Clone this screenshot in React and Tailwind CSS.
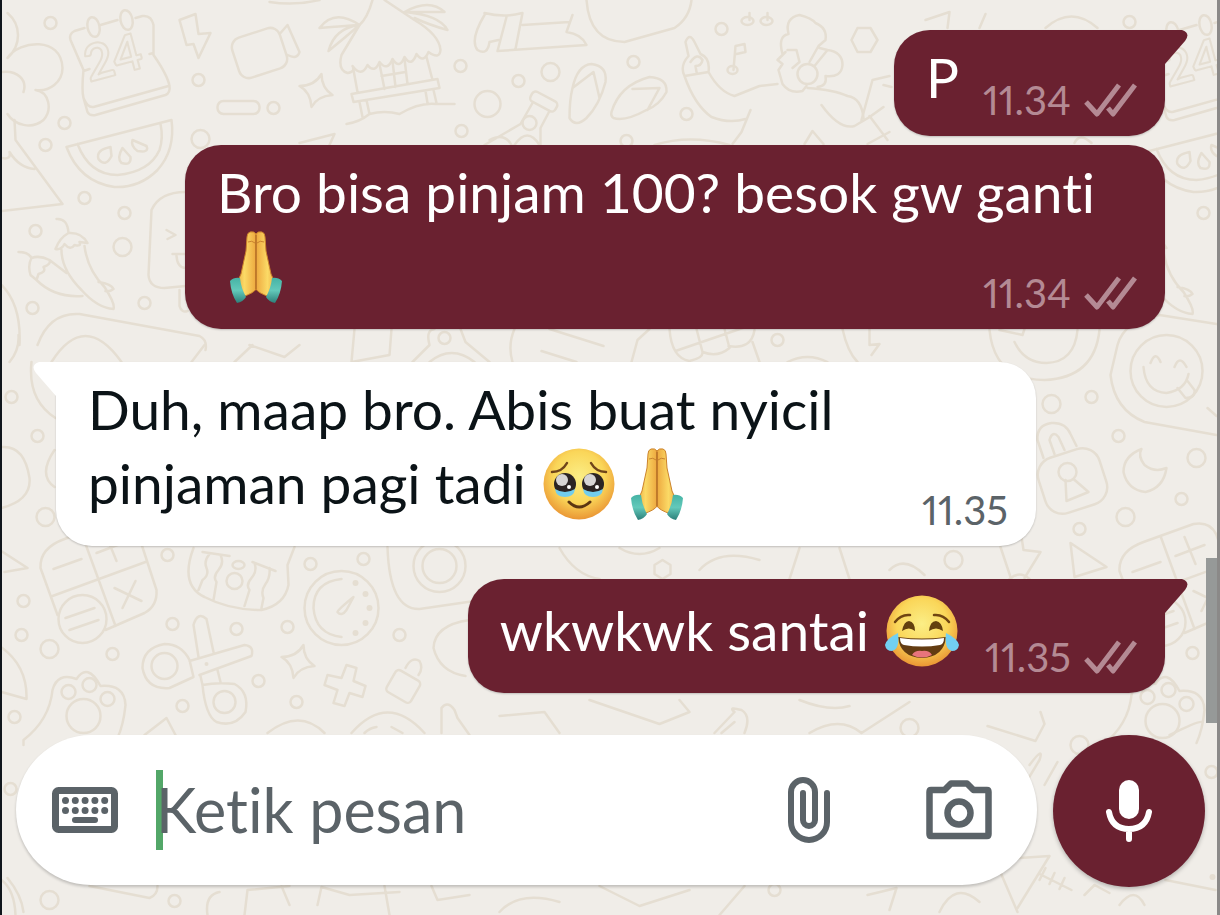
import React, { useState } from 'react';
import clsx from 'clsx';

const MESSAGES = [
    { id: 1, mine: true, tail: true, time: '11.34', lines: [['P']] },
    { id: 2, mine: true, time: '11.34', lines: [['Bro bisa pinjam 100? besok gw ganti'], [{ emoji: 'pray' }]] },
    { id: 3, mine: false, tail: true, time: '11.35', lines: [['Duh, maap bro. Abis buat nyicil'], ['pinjaman pagi tadi ', { emoji: 'plead' }, { emoji: 'pray' }]] },
    { id: 4, mine: true, tail: true, time: '11.35', lines: [['wkwkwk santai ', { emoji: 'joy' }]] },
];

const SMALL_DOTS = [
    [51, 23], [199, 80], [274, 108], [65, 123], [46, 145], [85, 198], [125, 213], [36, 231], [33, 308], [145, 303],
    [461, 66], [519, 81], [462, 131], [634, 62], [722, 29], [687, 114], [627, 141], [12, 397], [38, 436],
    [1092, 397], [1119, 436], [1182, 499], [1080, 529], [1204, 213], [778, 340], [445, 338],
    [168, 555], [311, 564], [364, 559], [24, 601], [22, 635], [113, 654], [173, 624], [237, 629], [288, 627],
    [400, 635], [259, 681], [183, 706], [297, 702], [15, 717], [1193, 653], [11, 789], [175, 901], [775, 890], [1130, 22], [1212, 772],
];
const BIG_DOTS = [[201, 139], [123, 247], [551, 72], [1052, 404], [1197, 458], [1126, 517], [50, 649], [46, 517], [1080, 745], [50, 900], [954, 560], [910, 728]];

function Wallpaper() {
    return (
        <svg className="absolute inset-0 h-full w-full" viewBox="0 0 1220 915" preserveAspectRatio="xMidYMid slice" aria-hidden="true">
            <defs>
                <g id="doodle-left">
                    {/* calendar */}
                    <path d="M85 28L75 31Q69 34 71 40L84 70Q82 90 84 98L88 112Q90 116 96 115L166 95Q171 93 170 86Q168 75 154 55L154 25Q152 15 143 16L136 18M101 25L118 20M84 98Q88 108 94 107L169 86M84 71L90 69M150 54L154 53" />
                    <ellipse cx="94" cy="27" rx="6" ry="10" transform="rotate(-12 94 27)" />
                    <ellipse cx="127" cy="20" rx="6" ry="10" transform="rotate(-12 127 20)" />
                    <text x="90" y="82" fontSize="50" fontWeight="700" fontFamily="Lato, sans-serif" strokeWidth="2" transform="rotate(-15 90 82)">24</text>
                    {/* watermelon */}
                    <path d="M67 147L172 120Q176 150 158 170Q140 188 115 187Q80 182 67 147ZM78 144Q90 175 118 175Q150 172 160 150Q164 138 161 124" />
                    <path d="M111 147Q96 150 99 159Q106 168 112 156ZM123 148Q117 158 122 163Q132 166 131 157ZM133 140Q131 146 138 151Q150 153 147 146Z" />
                    {/* chilli */}
                    <path d="M57 219Q68 218 69 233Q60 238 56 249Q62 250 65 244Q71 251 75 245Q82 247 80 242L88 243Q82 232 69 233M62 250Q62 270 82 290Q98 308 114 309Q116 304 105 287Q88 270 85 246M19 252Q29 252 32 258Q28 265 31 275L37 280L39 274Q47 272 44 267Q52 264 50 260Q40 255 32 258M37 280Q55 298 83 296M50 260L67 273M99 282Q112 284 114 289Q110 292 106 291" />
                    {/* paw */}
                    <path d="M24 745V740Q50 720 53 690Q58 672 77 679Q88 662 101 686Q125 684 126 705Q124 725 118 738" />
                    <circle cx="69" cy="692" r="7" /><circle cx="90" cy="685" r="7" /><circle cx="108" cy="699" r="7" /><circle cx="84" cy="716" r="17" />
                </g>
                <path id="spark" d="M300 86Q315 86 322 74Q322 88 333 95Q318 96 312 107Q311 92 300 86Z" />
                <g id="keypad">
                    <path d="M65 539Q40 548 41 568L58 615M65 539L115 521Q132 518 138 532L157 590Q158 606 145 613L106 630M82 533L116 626M53 596L146 562M54 569L82 559M97 553L126 542M106 534L117 561M115 588L142 601M136 581L123 608M66 618L95 608M70 630L99 620" />
                    <circle cx="83" cy="619" r="24" />
                </g>
            </defs>
            <g className="fill-none stroke-[#e5ded2]" strokeWidth="2.5" strokeLinecap="round" strokeLinejoin="round">
                <use href="#doodle-left" />
                <use href="#doodle-left" transform="translate(1079 5)" />
                <use href="#keypad" />
                <use href="#keypad" transform="translate(1079 3)" />
                <use href="#spark" />
                <use href="#spark" transform="translate(-18 571)" />
                {SMALL_DOTS.map(([x, y]) => <circle key={`${x}-${y}`} cx={x} cy={y} r="6" />)}
                {BIG_DOTS.map(([x, y]) => <circle key={`${x}-${y}`} cx={x} cy={y} r="9" />)}

                {/* flower, skirt, lightning, camcorder, pill */}
                <path d="M8 13C22 25 22 45 8 58C20 40 62 36 63 68C63 82 50 92 36 90C50 92 53 110 44 120C32 130 15 125 8 114M2 72C18 70 28 80 24 92" />
                <path d="M15 120L16 140L63 204L2 211M2 158Q12 160 10 152Q20 168 35 169" />
                <path d="M180 20L196 14L199 34L211 33L199 58L194 44L187 45Z" />
                <rect x="235" y="32" width="50" height="42" rx="10" transform="rotate(-18 260 53)" />
                <path d="M281 33L288 25L300 52Q298 60 288 55" />
                <rect x="218" y="101" width="42" height="13" rx="6" />
                <circle cx="488" cy="104" r="13" />

                {/* beach hut */}
                <path d="M373 0Q368 18 360 25L342 55Q338 70 348 73Q356 72 353 66Q362 78 368 65Q375 74 380 62Q388 72 393 59Q400 70 405 57Q412 68 417 54Q424 64 429 52Q440 60 441 50Q440 35 415 20L385 0" />
                <path d="M354 70L358 92M380 64L385 89M393 61L396 87M405 59L408 84M382 76L406 72M427 57L433 80M352 94L438 79L440 88L354 102ZM360 102L363 117M367 100L370 114M426 91L428 103M434 90L437 103M347 124Q360 122 370 114Q385 110 400 114Q420 102 437 104L455 104" />
                <path d="M360 25Q335 8 320 28Q345 26 360 25Q335 28 329 51Q345 38 360 25M405 12Q430 -2 445 12Q420 12 405 12Q440 15 448 30Q430 25 415 18" />

                {/* boot, plate, flip-flops */}
                <path d="M485 15Q470 40 478 50Q488 56 490 42L499 40M485 13Q505 18 523 13L516 49M507 17L498 51L587 45Q582 34 567 32L573 15M523 25L570 22" />
                <path d="M587 0Q590 42 625 42L675 28Q690 18 692 0M270 2Q295 6 320 0" />
                <path d="M573 88Q578 65 592 64Q608 66 606 82Q600 105 587 118Q576 128 570 118Q570 100 573 88L594 72L600 98M612 112Q620 85 650 77Q668 78 667 92Q660 105 647 110Q625 122 614 118Q611 116 612 112M633 89L660 88L648 110" />
                <rect x="530" y="96" width="28" height="11" rx="4" transform="rotate(28 544 102)" />
                <path d="M533 103L521 124L485 145M550 111L541 128V145M490 140Q505 132 512 145M515 145Q528 126 540 145" />
                <circle cx="530" cy="123" r="7" />

                {/* dancing woman */}
                <path d="M685 76Q680 66 689 56L686 42Q690 32 695 42L701 54Q711 58 709 72L685 76Q695 105 712 117Q730 124 746 119M709 72Q720 92 735 96Q750 90 760 86L778 84M822 105Q840 130 855 126Q870 118 884 107M751 110L742 132L733 144M691 62Q698 52 703 60Q702 66 696 66L697 72M808 88Q835 90 848 96Q862 98 864 118" />
                <path d="M734 70L736 46L745 44L746 52L737 54M750 20V13M768 20V13" />
                <ellipse cx="733" cy="70" rx="5" ry="4" /><ellipse cx="748" cy="21" rx="6" ry="4" /><ellipse cx="767" cy="21" rx="6" ry="4" />
                <path d="M783 54Q778 36 789 34Q785 18 800 15Q812 18 816 23Q828 28 826 40L819 46L810 62M788 50L797 50L800 62L793 68M786 52L778 60L783 64L779 70L783 84Q790 94 803 91L807 86M820 48L828 50L815 66M828 50Q843 52 843 65Q842 78 826 76Q828 86 818 87" />
                <circle cx="808" cy="74" r="10" />
                <path d="M858 28H871L878 40L871 52H858L852 40ZM862 120L873 80L890 76M870 116L888 140M868 144L890 132M300 143L335 134L330 145M805 144L813 131L824 144M655 145Q690 134 730 145" />
                <path d="M926 20L950 12L948 28M980 28L986 14M1046 28Q1072 5 1098 28M1075 143Q1080 132 1092 143M884 85L892 87" />

                {/* popsicle and tray */}
                <path d="M186 192Q160 192 152 210L149 275Q150 288 165 288L186 286M180 290V306Q182 313 188 311M167 230L176 235L168 239M173 254H186M177 256Q178 268 186 268" />
                <path d="M2 285Q22 305 20 345M38 345Q50 312 80 314L200 336Q208 340 206 350M32 362Q28 400 56 418M52 362Q85 310 122 362M10 362Q20 350 19 335" />
                <path d="M413 362L430 345Q426 330 435 329M461 329L466 342L490 362M430 362Q452 344 475 362M515 329Q508 345 513 362M550 329L604 346M542 351L577 362M632 362L638 340L650 329M670 329Q672 358 690 361Q704 358 703 352L697 329M676 351L752 325M725 329L730 348Q718 358 703 352M729 346Q752 350 755 330M753 342L760 362M788 362Q808 352 828 362M843 329Q848 352 858 362M870 329L870 345L880 344L872 355M192 362L205 345M250 345L285 357L300 345M355 329L352 362L390 355L392 329M235 362L253 345" />

                {/* smileys, padlock, moon */}
                <path d="M1217 324L1160 315Q1125 320 1118 345L1111 375Q1115 410 1145 422L1217 435M1144 367Q1146 392 1167 393Q1186 390 1189 374M1151 363Q1156 350 1161 362M1175 367Q1180 354 1187 367M1178 388L1186 398Q1196 398 1195 390L1188 381M1208 408L1217 416" />
                <circle cx="1167" cy="371" r="36" />
                <path d="M990 330Q995 380 1045 380Q1095 378 1100 330M1015 342Q1025 363 1047 363Q1075 362 1078 330M1000 330L1023 335L1025 329" />
                <rect x="1041" y="452" width="64" height="58" rx="18" transform="rotate(-18 1073 481)" />
                <path d="M1044 458L1038 440Q1037 425 1052 423Q1066 422 1071 434L1077 446M1055 454L1050 440Q1053 430 1059 437L1065 450" />
                <circle cx="1068" cy="472" r="9" />
                <path d="M1066 480L1067 501L1089 492L1074 479M1142 449Q1124 456 1124 472Q1128 490 1146 492Q1164 488 1167 468Q1155 473 1145 465Q1138 456 1142 449Z" />
                <path d="M1001 547L1012 580M1022 537L1024 550L1041 552L1025 578M1071 543L1107 567L1075 577ZM2 447Q25 445 30 478Q32 500 2 508M55 450Q38 475 55 487M0 550L28 568L5 572" />

                {/* bowl, stopwatch, camera */}
                <path d="M194 548Q180 585 205 597Q230 610 262 610Q285 605 289 585L288 565L295 547M203 552L230 556M253 562L276 571M210 554Q204 561 207 568T203 580L199 590M221 555Q225 563 219 570T217 582L214 600M255 563Q258 571 252 578T250 590L245 606M270 568Q271 577 266 584T264 598L262 608" />
                <circle cx="235" cy="581" r="8" /><ellipse cx="239" cy="565" rx="6" ry="4" />
                <circle cx="342" cy="608" r="37" />
                <path d="M342 579Q314 582 314 608Q316 634 342 637M354 597Q338 610 338 612Q342 617 347 610Z" />
                <path d="M388 547Q390 610 420 609L475 601M470 620Q435 625 434 648Q440 672 466 676" />
                <circle cx="440" cy="566" r="26" /><circle cx="440" cy="566" r="17" />
                <path d="M560 548Q575 575 600 579M620 548Q640 560 660 548M655 565L663 560L671 565V574L663 579L655 574ZM700 570Q720 548 760 560M790 579L800 548M840 548L850 579M890 570Q905 555 925 575M1010 579Q1020 570 1030 579" />

                {/* scissors, plus, tag */}
                <circle cx="165" cy="666" r="13" /><circle cx="225" cy="702" r="11" />
                <path d="M190 660Q182 644 165 644Q143 648 143 668Q147 690 170 688L194 677ZM190 661L245 645Q255 646 252 656L200 675M199 657L194 625Q198 611 207 619L214 652M203 685L201 676M218 670L221 682M203 685Q218 682 235 684Q250 692 246 712Q235 728 217 722Q206 716 203 685Z" />
                <path d="M347 665L357 668L354 681L366 686L363 697L350 693L345 706L334 703L338 690L325 685L328 675L342 678Z" />
                <rect x="390" y="674" width="28" height="25" rx="4" transform="rotate(30 404 686)" />
                <path d="M406 668Q412 656 420 661Q424 668 419 675M442 733V708Q448 700 455 710L458 718L470 735M145 735L167 718L176 735M268 733Q300 708 325 733M352 733Q388 692 425 733M365 733Q370 728 377 727M392 727L403 733M0 646Q28 665 27 699L2 692" />
                <path d="M500 716L545 712L560 733M590 700L660 724L690 712L680 700M715 733L735 712Q728 706 742 710Q752 716 745 733M735 722L722 733M800 700Q830 712 850 706M810 733Q840 715 862 733L910 702M988 726L1036 741L1045 724L1041 712M1170 735Q1200 720 1203 722M1030 765Q1045 745 1040 760L1025 785M1045 785L1058 762" />

                {/* strip under the composer */}
                <path d="M2 880Q15 890 16 915M8 878Q22 895 24 912M90 886L150 898Q158 895 158 886M208 915Q205 895 220 892M245 915L248 890L290 886M282 886L290 905M318 905L322 887L350 895L400 892M385 886L390 915M432 886L438 900L470 895M500 912Q520 890 560 902M600 886L640 906L690 890M720 915L745 886M868 895L897 888L890 910M940 912Q955 880 980 902M1000 870L1018 912M1020 858L1050 856L1018 908M1040 874L1072 890M1040 880L1046 868M1050 884L1055 873M1060 889L1065 878M1085 895L1095 885L1110 893M1120 905Q1135 885 1145 905M1166 880L1216 890" />
            </g>
            <g className="fill-[#e5ded2]">
                <circle cx="356" cy="583" r="3" /><circle cx="366" cy="594" r="3" /><circle cx="370" cy="608" r="3" /><circle cx="366" cy="623" r="3" /><circle cx="356" cy="633" r="3" />
                <circle cx="1213" cy="877" r="3" /><circle cx="207" cy="664" r="2" />
            </g>
        </svg>
    );
}

function Pray() {
    return (
        <svg className="mx-[3px] inline-block size-[72px] align-[-16px]" viewBox="0 0 72 72" role="img" aria-label="🙏">
            <defs>
                <linearGradient id="hand" x1="0" x2="1">
                    <stop offset="0" stopColor="#e8a23c" />
                    <stop offset=".45" stopColor="#fbda66" />
                    <stop offset="1" stopColor="#eda83f" />
                </linearGradient>
                <linearGradient id="cuff" x1="0" x2="0" y1="0" y2="1">
                    <stop offset="0" stopColor="#46b3a5" />
                    <stop offset=".5" stopColor="#63c9ba" />
                    <stop offset="1" stopColor="#2c7f79" />
                </linearGradient>
            </defs>
            <g id="pray-half">
                <path d="M36 3Q34 0 30 1Q27 2 27 6L26 20L21 43Q19 49 15 53L22 66Q34 62 36 58Z" fill="url(#hand)" stroke="#cc832c" />
                <path d="M28 11Q32 9 35 12" className="fill-none stroke-[#c9822f]" />
                <path d="M10 50Q14 46 20 47Q21 57 26 66Q23 71 17 72Q11 63 10 50Z" fill="url(#cuff)" />
            </g>
            <use href="#pray-half" transform="matrix(-1 0 0 1 72 0)" />
            <path d="M36 4V58" className="stroke-[#b97328]" strokeWidth="1.5" />
        </svg>
    );
}

function FaceGradient({ id }) {
    return (
        <radialGradient id={id} cx=".5" cy=".4" r=".6">
            <stop offset="0" stopColor="#fbee86" />
            <stop offset=".6" stopColor="#fad659" />
            <stop offset="1" stopColor="#ea9634" />
        </radialGradient>
    );
}

function Plead() {
    return (
        <svg className="mx-[3px] inline-block size-[72px] align-[-16px]" viewBox="0 0 72 72" role="img" aria-label="🥹">
            <defs><FaceGradient id="plead-face" /></defs>
            <circle cx="36" cy="36" r="35.5" fill="url(#plead-face)" />
            <path d="M9 24Q19 24 24 15M63 24Q53 24 48 15" className="fill-none stroke-[#70451a]" strokeWidth="2.5" strokeLinecap="round" />
            {[22, 50].map((x) => (
                <g key={x}>
                    <circle cx={x} cy="36" r="11" className="fill-[#2b2424]" />
                    <path d={`M${x - 10} 41Q${x} 47 ${x + 10} 41Q${x + 9} 49 ${x} 49Q${x - 9} 49 ${x - 10} 41Z`} className="fill-[#72cdec]" />
                    <circle cx={x - 3} cy="32" r="6" className="fill-[#d7d5d5]" />
                    <circle cx={x + 4} cy="39" r="2" className="fill-white" />
                </g>
            ))}
            <path d="M26 54Q36 64 47 54" className="fill-none stroke-[#5b3512]" strokeWidth="3" strokeLinecap="round" />
        </svg>
    );
}

function Joy() {
    return (
        <svg className="mx-[3px] inline-block size-[72px] overflow-visible align-[-16px]" viewBox="0 0 72 72" role="img" aria-label="😂">
            <defs><FaceGradient id="joy-face" /></defs>
            <circle cx="36" cy="36" r="35.5" fill="url(#joy-face)" />
            <path d="M9 27Q15 19 24 20M63 27Q57 19 48 20" className="fill-none stroke-[#704512]" strokeWidth="2.5" strokeLinecap="round" />
            <path d="M16 36Q18 26 23 26Q29 27 29 36Q23 31 16 36ZM43 36Q44 26 50 26Q56 27 57 36Q50 31 43 36Z" className="fill-[#63400f]" />
            <path d="M12 42Q36 45 60 42Q58 62 36 63Q14 62 12 42Z" className="fill-[#633c12]" />
            <path d="M14 43Q36 46 58 43Q58 49 54 50Q36 53 18 50Q14 49 14 43Z" className="fill-white" />
            <path d="M26 60Q29 55 36 56Q43 55 46 60Q36 65 26 60Z" className="fill-[#e8747c]" />
            <path d="M12 38Q0 44 -1 50Q0 56 6 56Q14 54 12 38ZM60 38Q72 44 73 50Q72 56 66 56Q58 54 60 38Z" className="fill-[#72d0f2]" />
        </svg>
    );
}

const EMOJI = { pray: Pray, plead: Plead, joy: Joy };

function Ticks() {
    return (
        <svg className="h-9 w-[54px]" viewBox="0 0 54 36" fill="none" stroke="currentColor" strokeWidth="5" role="img" aria-label="Terkirim">
            <path d="M3 20L14 32L36 3M25 26L30 32L52 3" strokeLinejoin="round" />
        </svg>
    );
}

function Bubble({ message }) {
    const { mine, tail, time, lines } = message;
    const long = lines.length > 1;
    const hasEmoji = lines[0].length > 1;

    return (
        <li className={clsx('flex', mine ? 'justify-end' : 'justify-start', message.id === 2 && 'mt-[9px]', message.id > 2 && 'mt-[33px]')}>
            <div
                className={clsx(
                    'relative rounded-[36px] pt-[10px] pr-7 pb-[14px] pl-8 shadow-[0_1px_2px_rgba(0,0,0,0.2)]',
                    mine ? 'bg-[#6a2130] text-white' : 'bg-white text-[#0b1317]',
                    tail && (mine ? 'rounded-tr-none' : 'rounded-tl-none'),
                    long ? 'grid w-full max-w-[980px]' : 'flex items-end gap-6',
                )}
            >
                {tail && (
                    <svg
                        className={clsx('absolute top-0 h-[35px] w-6', mine ? 'left-full text-[#6a2130]' : 'right-full -scale-x-100 text-white')}
                        viewBox="0 0 24 35" fill="currentColor" aria-hidden="true"
                    >
                        <path d="M-1 0H17Q26 3 20 11L0 34H-1Z" />
                    </svg>
                )}
                <p
                    className={clsx(
                        'text-[55px] leading-[74px]',
                        long && 'col-start-1 row-start-1 pb-3',
                        !long && (hasEmoji ? 'pt-1 pb-3' : 'pb-2'),
                    )}
                >
                    {lines.map((line, i) => (
                        <span key={i} className="block whitespace-pre">
                            {line.map((part, j) => {
                                if (typeof part === 'string') return part;
                                const Emoji = EMOJI[part.emoji];
                                return <Emoji key={j} />;
                            })}
                        </span>
                    ))}
                </p>
                <div
                    className={clsx(
                        'flex items-center gap-3 text-[40px] leading-[44px] proportional-nums',
                        mine ? 'text-[#b48a94]' : 'text-[#5b6368]',
                        long && 'col-start-1 row-start-1 self-end justify-self-end',
                    )}
                >
                    <time>{time}</time>
                    {mine && <Ticks />}
                </div>
            </div>
        </li>
    );
}

function Composer() {
    const [text, setText] = useState('');

    return (
        <form className="mt-auto flex items-start gap-4 pr-3 pb-7 pl-[14px]" onSubmit={(e) => e.preventDefault()}>
            <div className="flex h-[150px] min-w-0 flex-1 items-center rounded-full bg-white pr-[45px] pl-9 text-[#5b6368] shadow-[0_2px_3px_rgba(0,0,0,0.2)]">
                <button type="button" aria-label="Keyboard">
                    <svg className="h-[46px] w-[66px]" viewBox="0 0 66 46" fill="none" stroke="currentColor" aria-hidden="true">
                        <rect x="3.5" y="3.5" width="59" height="39" rx="3" strokeWidth="7" />
                        <path d="M13.5 13.5H53.5M13.5 23.5H53.5" strokeWidth="7" strokeLinecap="round" strokeDasharray="0 9.8" />
                        <path d="M23 33H43" strokeWidth="6" strokeLinecap="round" />
                    </svg>
                </button>
                <label className="relative ml-[38px] flex min-w-0 flex-1 items-center">
                    {text === '' && <span className="absolute left-0 h-20 w-[7px] bg-[#53a768]" />}
                    <input
                        type="text" aria-label="Ketik pesan" placeholder="Ketik pesan"
                        value={text} onChange={(e) => setText(e.target.value)}
                        className="relative w-full bg-transparent text-[61px] leading-[80px] text-[#0b1317] caret-[#53a768] outline-none placeholder:text-[#5b6368]"
                    />
                </label>
                <button type="button" aria-label="Lampirkan" className="mr-24">
                    <svg className="h-[66px] w-[42px]" viewBox="0 0 42 66" fill="none" stroke="currentColor" strokeWidth="6" strokeLinecap="round" aria-hidden="true">
                        <path d="M39 16V45A18 18 0 0 1 3 45V15A12 12 0 0 1 27 15V43A6 6 0 0 1 15 43V16" />
                    </svg>
                </button>
                <button type="button" aria-label="Kamera">
                    <svg className="h-[60px] w-[66px]" viewBox="0 0 66 60" fill="none" stroke="currentColor" strokeWidth="6.5" strokeLinejoin="round" aria-hidden="true">
                        <path d="M5 10H18.5L25 3.5H41L47.5 10H61Q62.5 10 62.5 12V54Q62.5 56 61 56H5Q3.5 56 3.5 54V12Q3.5 10 5 10Z" />
                        <circle cx="33" cy="33" r="11.5" />
                    </svg>
                </button>
            </div>
            <button type="button" aria-label="Rekam suara" className="flex size-[152px] shrink-0 items-center justify-center rounded-full bg-[#6a2130] text-white shadow-[0_2px_4px_rgba(0,0,0,0.25)]">
                <svg className="h-[62px] w-[46px]" viewBox="0 0 46 62" fill="none" stroke="currentColor" strokeWidth="6" strokeLinecap="round" aria-hidden="true">
                    <rect x="13" y="0" width="20" height="39" rx="10" fill="currentColor" stroke="none" />
                    <path d="M3 32Q6 49 23 49Q40 49 43 32M23 49V59" />
                </svg>
            </button>
        </form>
    );
}

export default function App() {
    return (
        <div className="relative min-h-screen overflow-hidden border-r-[3px] border-l-2 border-r-[#8b8988] border-l-[#10161c] bg-[#f0ede8] font-['Lato',sans-serif] [font-variant-ligatures:none]">
            <Wallpaper />
            <main className="relative flex min-h-screen flex-col pt-[30px]">
                <ul className="flex flex-col pr-[52px] pl-[54px]">
                    {MESSAGES.map((message) => <Bubble key={message.id} message={message} />)}
                </ul>
                <Composer />
            </main>
            <div className="absolute top-[61%] right-0 h-[18%] w-[11px] bg-[#969998]" />
        </div>
    );
}
